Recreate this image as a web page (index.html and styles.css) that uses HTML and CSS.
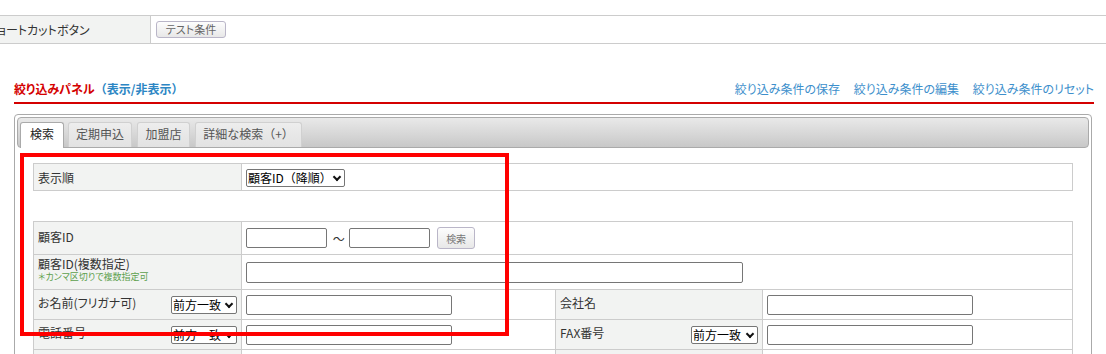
FILE: index.html
```html
<!DOCTYPE html>
<html lang="ja">
<head>
  <meta charset="UTF-8" />
  <meta name="viewport" content="width=device-width, initial-scale=1.0"/>
  <title>顧客一覧 - 絞り込み</title>
  <link rel="stylesheet" href="styles.css">
</head>
<body>

  <!-- ショートカット -->
  <div class="shortcut">
    <div class="shortcut-label">ショートカットボタン</div>
    <div class="shortcut-body">
      <button class="btn-small">テスト条件</button>
    </div>
  </div>

  <div class="filter">
    <div class="filter-head">
      <h2>絞り込みパネル<a href="#">（表示/非表示）</a></h2>
      <div class="filter-links">
        <a href="#">絞り込み条件の保存</a>
        <a href="#">絞り込み条件の編集</a>
        <a href="#">絞り込み条件のリセット</a>
      </div>
    </div>

    <div class="tabs">
      <ul class="tab-nav">
        <li class="active tab-search">検索</li>
        <li class="tab-regular">定期申込</li>
        <li class="tab-member">加盟店</li>
        <li class="tab-detail">詳細な検索（+）</li>
      </ul>

      <div class="tab-body">
        <table class="cond">
          <colgroup><col class="col-label"><col></colgroup>
          <tr class="row-sort">
            <th>表示順</th>
            <td>
              <span class="select-wrap">
                <select class="sel-sort">
                  <option>顧客ID（降順）</option>
                  <option>顧客ID（昇順）</option>
                </select>
              </span>
            </td>
          </tr>
        </table>

        <table class="cond cond-main">
          <colgroup>
            <col class="col-label"><col class="col-value">
            <col class="col-label2"><col>
          </colgroup>
          <tr class="row-id">
            <th>顧客ID</th>
            <td colspan="3">
              <input type="text" class="in-id">
              <span class="tilde">～</span>
              <input type="text" class="in-id">
              <button class="btn-small btn-find">検索</button>
            </td>
          </tr>
          <tr class="row-multi">
            <th class="top">顧客ID(複数指定)<br><small class="note">＊カンマ区切りで複数指定可</small></th>
            <td colspan="3"><input type="text" class="in-wide"></td>
          </tr>
          <tr class="row">
            <th>
              <div class="lbl">
                <span>お名前(フリガナ可)</span>
                <span class="select-wrap">
                  <select class="sel-match"><option>前方一致</option><option>完全一致</option><option>部分一致</option></select>
                </span>
              </div>
            </th>
            <td><input type="text" class="in-mid"></td>
            <th><div class="lbl"><span>会社名</span></div></th>
            <td><input type="text" class="in-mid"></td>
          </tr>
          <tr class="row">
            <th>
              <div class="lbl">
                <span>電話番号</span>
                <span class="select-wrap">
                  <select class="sel-match"><option>前方一致</option><option>完全一致</option><option>部分一致</option></select>
                </span>
              </div>
            </th>
            <td><input type="text" class="in-mid"></td>
            <th>
              <div class="lbl">
                <span>FAX番号</span>
                <span class="select-wrap">
                  <select class="sel-match sel-fax"><option>前方一致</option><option>完全一致</option><option>部分一致</option></select>
                </span>
              </div>
            </th>
            <td><input type="text" class="in-mid"></td>
          </tr>
          <tr class="row">
            <th><div class="lbl"><span>メールアドレス</span></div></th>
            <td><input type="text" class="in-mid"></td>
            <th><div class="lbl"><span>郵便番号</span></div></th>
            <td><input type="text" class="in-mid"></td>
          </tr>
        </table>
      </div>
    </div>
  </div>

  <!-- 注目枠 -->
  <div class="mark"></div>

</body>
</html>
```

FILE: styles.css
```css
html {
  overflow: hidden;
}

body {
  margin: 0;
  font-family: "Noto Sans CJK JP", "Noto Sans", sans-serif;
  font-size: 12px;
  font-feature-settings: "palt";
  color: #333;
  background: #fff;
}

a {
  text-decoration: none;
}

/* shortcut row */
.shortcut {
  display: flex;
  margin: 15px 0 0 -20px;
  height: 27px;
  border-top: 1px solid #ccc;
  border-bottom: 1px solid #ccc;
}

.shortcut-label {
  width: 171px;
  box-sizing: border-box;
  padding-left: 6px;
  line-height: 27px;
  background: #f2f3f2;
  border-right: 1px solid #ccc;
  white-space: nowrap;
}

.shortcut-body {
  display: flex;
  align-items: center;
  padding-left: 5px;
}

.btn-small {
  font-family: inherit;
  font-feature-settings: "palt";
  font-size: 11px;
  color: #666;
  height: 17px;
  width: 70px;
  padding: 0;
  line-height: 15px;
  border: 1px solid #bab6c8;
  border-radius: 3px;
  background: linear-gradient(#fdfdfd, #e8e8e8);
  cursor: pointer;
}

/* filter panel */
.filter {
  padding: 0 12px 0 14px;
}

.filter-head {
  display: flex;
  justify-content: space-between;
  align-items: flex-end;
  margin-top: 36px;
  padding-bottom: 4px;
  line-height: 18px;
  border-bottom: 2px solid #d40000;
}

.filter-head h2 {
  margin: 0;
  font-size: 12px;
  font-weight: bold;
  color: #d40000;
}

.filter-head h2 a {
  color: #2c86c4;
  font-feature-settings: normal;
}

.filter-links a {
  color: #3d8fcc;
  margin-left: 11px;
}

/* tabs */
.tabs {
  margin: 10px 2px 0 0;
  padding: 2px;
  border: 1px solid #aaa;
  border-radius: 4px;
}

.tab-nav {
  display: flex;
  align-items: flex-end;
  height: 29px;
  margin: 0;
  padding: 0 0 0 2px;
  list-style: none;
  border: 1px solid #aaa;
  border-radius: 4px;
  background: linear-gradient(#e9e9e9, #c8c8c8);
}

.tab-nav li {
  box-sizing: border-box;
  height: 25px;
  margin-right: 5px;
  line-height: 21px;
  text-align: center;
  color: #555;
  background: linear-gradient(#ededed, #e2e2e2);
  border: 1px solid #d0d0d0;
  border-bottom: 0;
  border-radius: 3px 3px 0 0;
}

.tab-nav li.active {
  height: 26px;
  margin-bottom: -1px;
  color: #222;
  background: #fff;
  border-color: #aaa;
}

.tab-search { width: 44px; margin-right: 4px !important; }
.tab-regular { width: 64px; }
.tab-member { width: 53px; }
.tab-detail { width: 107px; font-feature-settings: normal; }

.tab-body {
  padding: 15px 16px 0;
}

/* condition tables */
.cond {
  width: 100%;
  table-layout: fixed;
  border-collapse: collapse;
}

.cond th,
.cond td {
  border: 1px solid #ccc;
  padding: 0 4px;
  vertical-align: middle;
  white-space: nowrap;
}

.cond th {
  background: #f2f3f2;
  font-weight: normal;
  text-align: left;
  color: #333;
}

.cond th.top {
  vertical-align: top;
  padding-top: 2px;
  line-height: 14px;
}

.col-label { width: 208px; }
.col-value { width: 314px; }
.col-label2 { width: 207px; }

.row-sort { height: 27px; }

.cond-main { margin-top: 30px; }
.row-id { height: 33px; }
.row-id th { padding-bottom: 3px; }
.row-multi { height: 35px; }
.row { height: 30px; }

.note {
  display: block;
  font-size: 9px;
  line-height: 12px;
  color: #5ca04c;
}

.lbl {
  display: flex;
  justify-content: space-between;
  align-items: flex-start;
  line-height: 14px;
  min-height: 18px;
}

input[type="text"] {
  box-sizing: border-box;
  height: 20px;
  margin: 0;
  padding: 0 3px;
  border: 1px solid #767676;
  border-radius: 2px;
  background: #fff;
  vertical-align: middle;
}

.in-id { width: 81px; }
.in-wide { width: 497px; height: 21px !important; }
.in-mid { width: 206px; }

.tilde {
  display: inline-block;
  margin: 0 2px 0 3px;
  vertical-align: middle;
  color: #333;
}

.btn-find {
  width: 38px;
  height: 22px;
  margin-left: 4px;
  font-size: 10px;
  color: #777;
  vertical-align: middle;
}

/* selects with drawn chevron */
.select-wrap {
  position: relative;
  display: inline-block;
  flex-shrink: 0;
  vertical-align: middle;
  line-height: 0;
}

.select-wrap::after {
  content: "";
  position: absolute;
  right: 5px;
  top: 5px;
  width: 4px;
  height: 4px;
  border-right: 2px solid #111;
  border-bottom: 2px solid #111;
  transform: rotate(45deg);
  pointer-events: none;
}

select {
  -webkit-appearance: none;
  appearance: none;
  box-sizing: border-box;
  font-family: inherit;
  font-feature-settings: normal;
  font-size: 12px;
  line-height: 16px;
  color: #000;
  height: 18px;
  margin: 0;
  padding: 0 14px 0 1px;
  border: 1px solid #767676;
  border-radius: 2px;
  background: #fff;
}

.sel-sort { width: 99px; }
.sel-match { width: 66px; }
.sel-fax { width: 67px; }

/* annotation box */
.mark {
  position: absolute;
  left: 20px;
  top: 153px;
  width: 489px;
  height: 183px;
  box-sizing: border-box;
  border: 4px solid #ff0000;
  pointer-events: none;
}
```
